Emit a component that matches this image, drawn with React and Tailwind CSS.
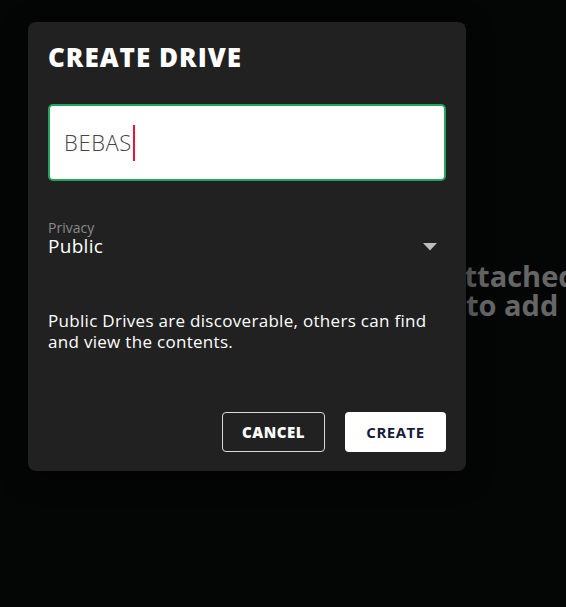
export default function App() {
  return (
    <div className="relative h-[607px] w-full overflow-hidden bg-[#040606]" style={{ fontFamily: "'Open Sans', 'Noto Sans', sans-serif" }}>
      <div className="absolute left-[447px] top-[261px] whitespace-nowrap text-[29px] font-bold leading-[29px] text-[#666666]">
        <div>attached</div>
        <div className="pl-[19px]">to add s</div>
      </div>

      <div className="absolute left-[28px] top-[22px] flex h-[449px] w-[438px] flex-col rounded-lg bg-[#212121] px-5 pt-[19px] shadow-[0_6px_24px_rgba(0,0,0,0.6)]">
        <h1 className="text-[26px] font-extrabold leading-[32px] tracking-[1px] text-white">CREATE DRIVE</h1>

        <div className="mt-[31px] flex h-[77px] items-center rounded-[5px] border-2 border-[#23a65b] bg-white pl-[14px]">
          <span className="text-[22px] font-light tracking-[0.6px] text-[#444444]">BEBAS</span>
          <span className="ml-[1px] h-[36px] w-[2px] bg-[#f0103a]"></span>
        </div>

        <div className="mt-[39px] flex items-end justify-between">
          <div className="flex flex-col">
            <span className="text-[14px] leading-[15px] text-[#8a8a8a]">Privacy</span>
            <span className="text-[19px] leading-[22px] tracking-[0.3px] text-white">Public</span>
          </div>
          <svg width="14" height="8" viewBox="0 0 14 8" className="mb-[6px] mr-[9px]">
            <path d="M0 0 L14 0 L7 7.5 Z" fill="#bdbdbd" />
          </svg>
        </div>

        <p className="mt-[53px] text-[17px] leading-[21px] tracking-[0.3px] text-white">
          Public Drives are discoverable, others can find and view the contents.
        </p>

        <div className="mt-auto mb-[19px] flex justify-end gap-5">
          <button className="flex h-[40px] w-[103px] items-center justify-center rounded-[4px] border border-[#d9d9d9] text-[15px] font-extrabold tracking-[0.5px] text-white">
            CANCEL
          </button>
          <button className="flex h-[40px] w-[101px] items-center justify-center rounded-[4px] bg-white text-[15px] font-bold tracking-[0.5px] text-[#171a3a]">
            CREATE
          </button>
        </div>
      </div>
    </div>
  );
}
